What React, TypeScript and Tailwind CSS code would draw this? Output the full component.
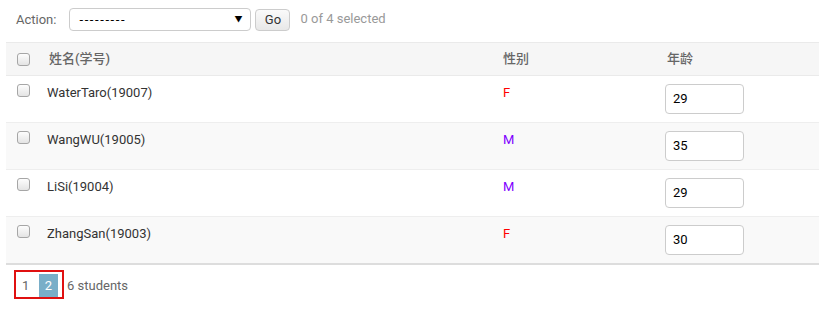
import React from "react";

const rows = [
  { name: "WaterTaro(19007)", sex: "F", age: "29" },
  { name: "WangWU(19005)", sex: "M", age: "35" },
  { name: "LiSi(19004)", sex: "M", age: "29" },
  { name: "ZhangSan(19003)", sex: "F", age: "30" },
];

function Box() {
  return (
    <span className="block w-[13px] h-[13px] rounded-[3px] border border-[#a6a6a6] bg-gradient-to-b from-[#fdfdfd] to-[#e4e4e4]" />
  );
}

export default function App() {
  return (
    <div className="w-[819px] h-[326px] bg-white text-[13px] text-[#333] overflow-hidden" style={{ fontFamily: 'Roboto, "Noto Sans CJK SC", sans-serif' }}>
      <div className="flex items-center h-[42px] pl-[16px] pb-[3px]">
        <span className="text-[#666] mr-[13px]">Action:</span>
        <div className="relative w-[182px] h-[23px] border border-[#ccc] rounded-[4px] flex items-center pl-[9px] text-[#000]">
          <span className="tracking-[1.6px]">---------</span>
          <span className="absolute right-[8px] top-[5px] text-[8px] text-[#000]">▼</span>
        </div>
        <div className="ml-[4px] w-[35px] h-[22px] border border-[#ccc] rounded-[4px] bg-gradient-to-b from-[#fafafa] to-[#e8e8e8] flex items-center justify-center text-[#333]">Go</div>
        <span className="ml-[10px] text-[#999] -mt-[1px]">0 of 4 selected</span>
      </div>
      <div className="ml-[6px]">
        <div className="flex h-[34px] items-center bg-[#f6f6f6] border-t border-b border-[#eaeaea]">
          <div className="w-[30px] pl-[11px]"><Box /></div>
          <div className="w-[456px] pl-[13px] text-[#666] font-medium">姓名(学号)</div>
          <div className="w-[164px] pl-[11px] text-[#666] font-medium">性别</div>
          <div className="flex-1 pl-[11px] text-[#666] font-medium">年龄</div>
        </div>
        {rows.map((r, i) => (
          <div key={i} className={`flex h-[47px] items-start border-b ${i === rows.length - 1 ? "border-[#ddd]" : "border-[#eee]"} ${i % 2 === 1 ? "bg-[#f9f9f9]" : "bg-white"}`}>
            <div className="w-[30px] pl-[11px] pt-[8px]"><Box /></div>
            <div className="w-[456px] pl-[11px] pt-[7px]">{r.name}</div>
            <div className={`w-[164px] pl-[11px] pt-[7px] ${r.sex === "F" ? "text-[#ff0000]" : "text-[#7f00ff]"}`}>{r.sex}</div>
            <div className="flex-1 pl-[9px] pt-[8px]">
              <div className="w-[79px] h-[30px] border border-[#ccc] rounded-[4px] bg-white flex items-center pl-[7px] text-[#000]">{r.age}</div>
            </div>
          </div>
        ))}
        <div className="h-[1px] bg-[#ddd]" />
      </div>
      <div className="flex items-end mt-[5px] pl-[14px]">
        <div className="flex items-end h-[29px] w-[50px] border-2 border-[#e01010]">
          <span className="w-[23px] h-[23px] flex items-center pl-[6px] pt-[1px] text-[#666]">1</span>
          <span className="w-[19px] h-[23px] flex items-center justify-center pt-[1px] bg-[#79aec8] text-white">2</span>
        </div>
        <span className="ml-[3px] mb-[4px] text-[#666]">6 students</span>
      </div>
    </div>
  );
}
